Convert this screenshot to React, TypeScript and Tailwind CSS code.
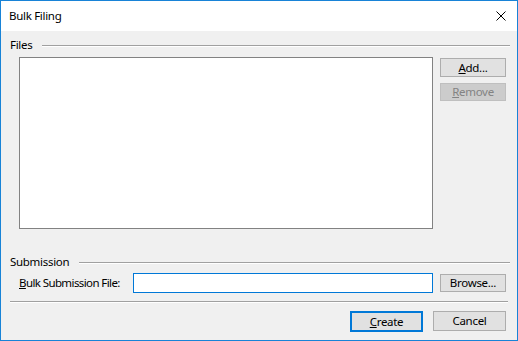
import React from 'react';

const font = { fontFamily: '"Noto Sans", "Liberation Sans", sans-serif' };

function WinButton({
    children,
    disabled,
    primary,
    className = '',
}: {
    children: React.ReactNode;
    disabled?: boolean;
    primary?: boolean;
    className?: string;
}) {
    const base = 'flex items-center justify-center text-[11.5px] tracking-[-0.3px] leading-none';
    const look = disabled
        ? 'border border-[#bfbfbf] bg-[#cccccc] text-[#838383]'
        : primary
          ? 'border-2 border-[#0078d7] bg-[#e1e1e1] text-black'
          : 'border border-[#adadad] bg-[#e1e1e1] text-black';
    return (
        <button type="button" disabled={disabled} className={`${base} ${look} ${className}`}>
            {children}
        </button>
    );
}

function GroupHeader({ label }: { label: string }) {
    return (
        <div className="flex h-[14px] items-center">
            <span className="leading-none text-black">{label}</span>
            <div className="ml-[10px] mt-[1px] flex-1 border-t border-[#a0a0a0] border-b border-b-white" />
        </div>
    );
}

export default function App() {
    return (
        <div
            style={font}
            className="flex h-[341px] w-[518px] flex-col border border-[#1883d7] bg-[#f0f0f0] text-[11.5px] tracking-[-0.3px]"
        >
            {/* Title bar */}
            <div className="flex h-[30px] items-center justify-between bg-white pl-[8px] pr-[11px]">
                <span className="leading-none text-black">Bulk Filing</span>
                <svg width="10" height="10" viewBox="0 0 10 10">
                    <path d="M0.5 0.5 L9.5 9.5 M9.5 0.5 L0.5 9.5" stroke="#000" strokeWidth="1" />
                </svg>
            </div>

            {/* Files */}
            <div className="flex flex-col pl-[9px] pr-[7px] pt-[7px]">
                <GroupHeader label="Files" />
                <div className="mt-[5px] flex pl-[9px]">
                    <div className="h-[172px] w-[414px] border border-[#828282] bg-white" />
                    <div className="ml-[7px] flex flex-col gap-[6px] pt-[1px]">
                        <WinButton className="h-[19px] w-[66px]">
                            <span>
                                <span className="underline">A</span>dd...
                            </span>
                        </WinButton>
                        <WinButton disabled className="h-[18px] w-[66px]">
                            <span>
                                <span className="underline">R</span>emove
                            </span>
                        </WinButton>
                    </div>
                </div>
            </div>

            {/* Submission */}
            <div className="flex flex-col pl-[9px] pr-[7px] pt-[26px]">
                <GroupHeader label="Submission" />
                <div className="mt-[4px] flex items-center pl-[9px]">
                    <span className="w-[114px] shrink-0 whitespace-nowrap leading-none tracking-[-0.6px] text-black">
                        <span className="underline">B</span>ulk Submission File:
                    </span>
                    <div className="h-[20px] w-[300px] border border-[#0078d7] bg-white" />
                    <WinButton className="ml-[7px] h-[18px] w-[66px]">Browse...</WinButton>
                </div>
            </div>

            <div className="mx-[9px] mt-[8px] border-t border-[#a0a0a0] border-b border-b-white" />

            <div className="mt-[8px] flex justify-end gap-[10px] pr-[11px]">
                <WinButton primary className="h-[21px] w-[73px]">
                    <span>
                        <span className="underline">C</span>reate
                    </span>
                </WinButton>
                <WinButton className="h-[20px] w-[73px]">Cancel</WinButton>
            </div>
        </div>
    );
}
